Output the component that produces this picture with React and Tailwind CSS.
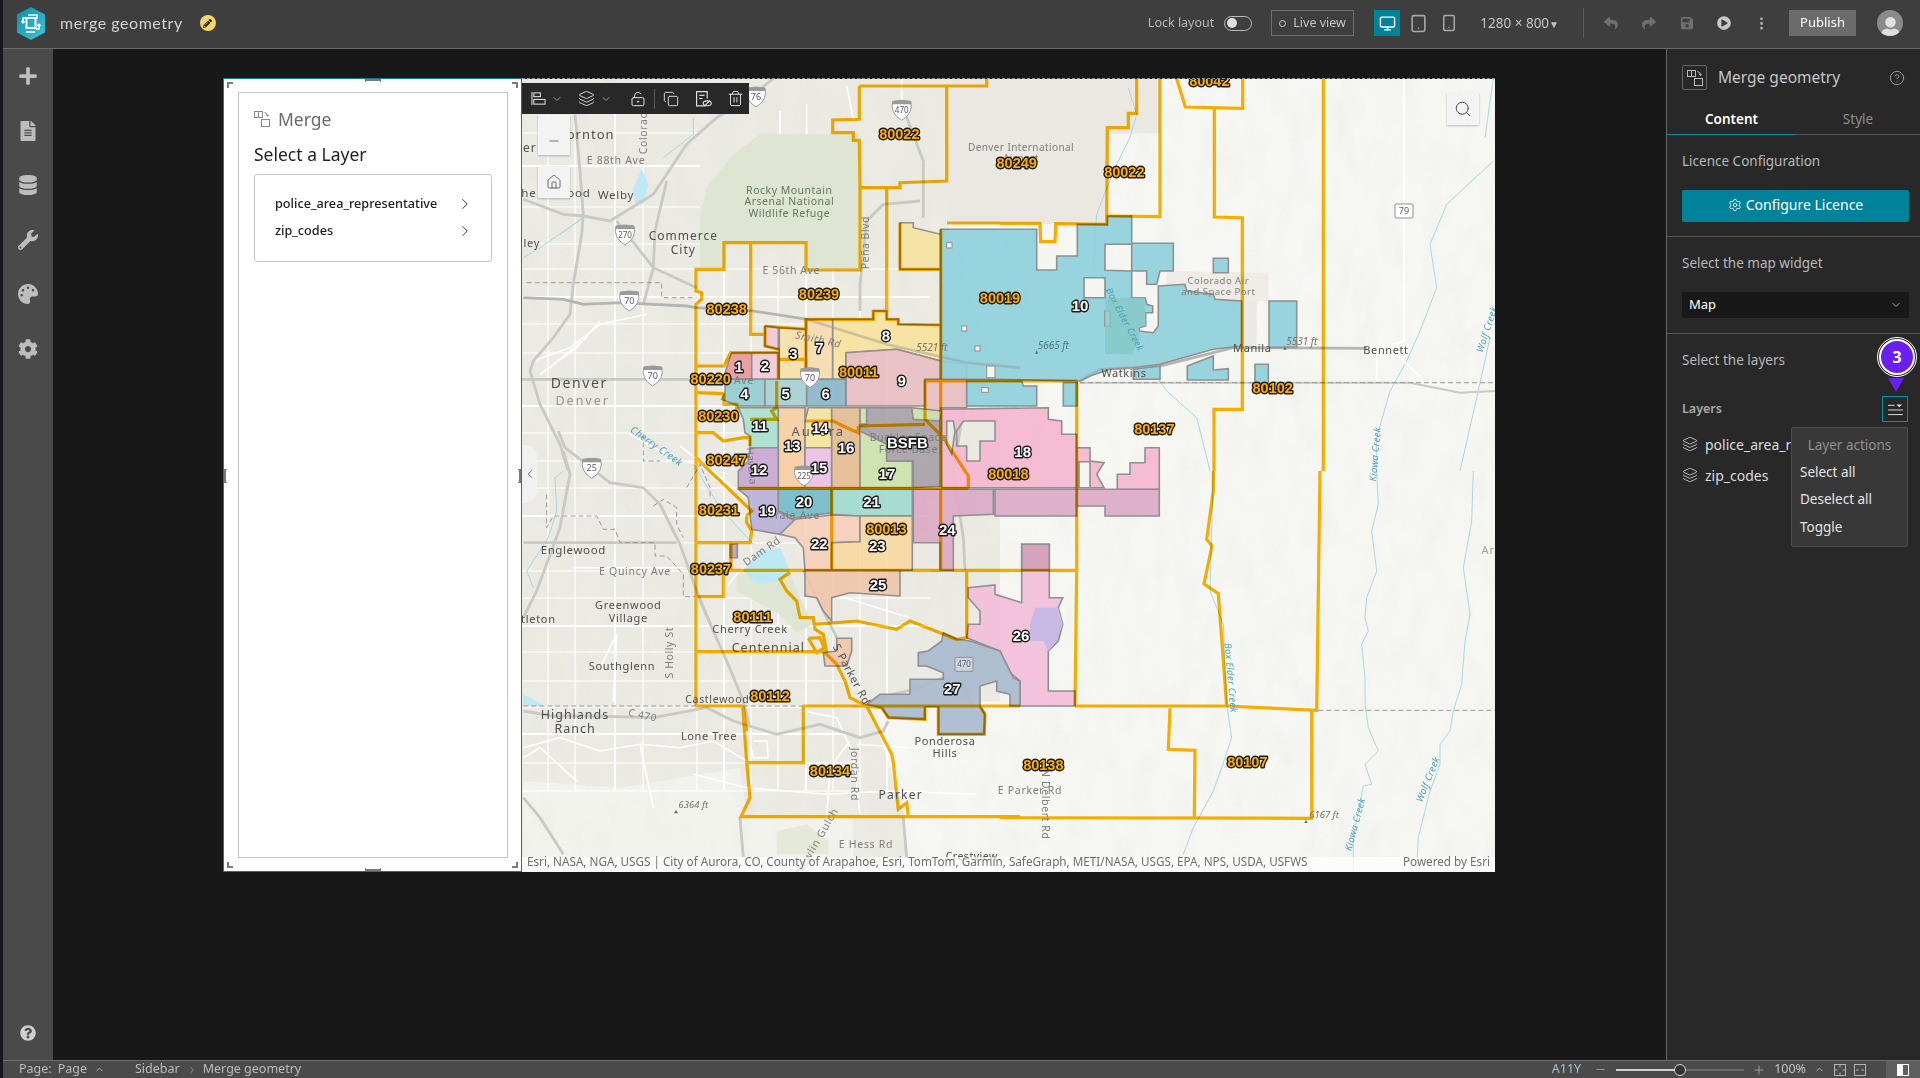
import React from "react";
import { FaPlus, FaFileAlt, FaDatabase, FaWrench, FaPalette, FaCog, FaQuestionCircle, FaReply, FaShare, FaSave, FaPlayCircle, FaUser, FaPencilAlt } from "react-icons/fa";
import { BsThreeDotsVertical } from "react-icons/bs";
import { Monitor, Tablet, Smartphone, Layers, ChevronRight, ChevronDown, ChevronLeft, ChevronUp, Settings, CircleHelp, Search, Home, Minus, Plus, LockKeyholeOpen, Copy, Trash2 } from "lucide-react";

const conv = (ox, oy) => (s) =>
  s.trim().split(/\s+/).map((p) => { const [x, y] = p.split(",").map(Number); return `${(ox + x / 3).toFixed(1)},${(oy + y / 3).toFixed(1)}`; }).join(" ");
const z4 = conv(520, 70), z5 = conv(680, 330), z8 = conv(520, 600), z9 = conv(1000, 70), z10 = conv(1000, 470), z11 = conv(520, 430);
const pathOf = (...rings) => rings.map((r) => "M" + r.split(" ").join("L") + "Z").join("");

const urban = "522,78 947,78 947,222 1000,380 1000,700 870,705 905,815 905,871 522,871";
const gridV = [548, 575, 615, 643, 697, 724, 751, 778, 806, 833, 860, 887];
const gridH = [132, 165, 206, 243, 268, 296, 323, 352, 378, 405, 432, 460, 487, 515, 542, 570, 597, 625, 651, 680, 706, 733, 762, 790];

const grayRoads = [
  z4("10,385 130,430 190,435 270,450 400,370 500,220 590,140 700,70 760,23"),
  z4("165,130 180,300 190,430 185,490 160,640 150,730 100,800 40,870 30,900 60,1000 120,1120 145,1200"),
  z4("10,680 130,685 190,700 300,695 500,705 528,710 700,720 860,745 1100,820 1340,875 1500,890"),
  z4("290,450 400,590 530,650"),
  z4("440,330 405,480 400,590 370,700"),
  z4("1020,720 1020,640 1040,450 1090,400 1200,390"),
  z4("1145,100 1210,270 1210,440"),
  z4("5,925 530,925 1000,925"),
  z11("115,0 135,50 200,100 270,155 370,170 420,220 480,340 530,480 580,600"),
  z11("130,60 150,130 120,290 50,480 10,560"),
  z11("10,335 150,335 470,335"),
  z8("540,0 620,180 670,300 690,380"),
  z8("10,330 100,345 220,345 400,350 560,320 640,360 770,400 900,370 1020,410 1090,390 1105,360"),
  z8("10,590 60,650 130,760"),
  z8("660,650 670,770"),
  z8("1150,650 1160,770"),
  z5("862,150 850,240 820,420 850,620 855,718"),
  z5("375,0 380,145 375,350 370,470"),
  z5("457,0 455,145"),
  z5("370,718 430,840 470,920"),
  z5("600,1100 700,1075 790,1040 850,1060 880,1130"),
  z9("240,930 300,895 480,885 700,830 1100,832"),
  z9("240,935 1230,935 1380,965 1485,960"),
];
const whiteRoads = [
  z4("40,870 150,830 240,760 380,730"), z4("60,910 170,830 240,750"), z4("100,880 200,800"),
  z8("10,440 120,410 240,450 360,430 480,440 580,420 680,480"), z8("170,540 60,440 10,470"), z8("680,560 920,580 1110,570 1370,580"),
  z8("240,200 290,100 280,300"), z8("850,330 950,350 1000,460 1020,640"), z8("700,420 740,420 745,470 700,470 690,430"), z8("1170,440 1010,430"),
  z8("360,430 400,620"), z8("920,650 930,500 990,420"), z8("520,520 680,560"),
  z11("330,10 460,80 530,100"), z11("690,390 640,440 620,470"), z11("160,410 490,410"),
  z5("0,345 200,500"), z5("460,790 690,860"), z9("1212,23 1212,810 1130,835 1130,930"), z9("1190,850 1290,945"), z9("810,832 1100,832"),
  z4("1145,23 1145,100"), z4("980,45 1000,145"), z4("780,190 780,120"), z4("860,190 860,100"),
];
const rivers = [
  z10("1130,0 1135,100 1115,180 1130,300 1100,380 1095,440 1105,480 1085,520 1095,620 1095,700 1105,770 1135,840 1095,880 1115,940 1090,945 1060,1100 1060,1200"),
  z10("1420,0 1415,150 1390,290 1410,430 1395,510 1385,640 1360,720 1350,780 1320,820 1320,880 1290,960 1255,1100 1250,1200"),
  z10("640,0 630,360 670,460 680,700 695,800 665,890 640,960 580,1070 550,1150"),
  z9("1480,270 1340,400 1290,520 1310,650 1260,780 1220,870 1170,960 1130,1100 1130,1200"),
  z9("1470,800 1430,980 1380,1200"),
  z9("385,50 410,130 390,200 340,300 290,430 280,580 330,650 390,800 500,960 590,1040 630,1200"),
  z9("1480,23 1455,200"),
  z4("120,490 190,440 60,530 10,560"), z4("340,1080 480,1180"), z4("520,140 520,190 430,260"),
  z11("130,120 105,140 110,240 85,320 20,420 40,470"), z11("520,100 600,230 700,340"),
];
const orange = [
  z4("1018,45 1018,145 938,147 938,185 1000,185 1000,208 1018,208 1020,350 1140,350 1140,335 1280,330 1280,45 1018,45"),
  z4("1280,45 1400,45 1400,23"), z4("1100,350 1100,720"),
  z4("528,885 528,700 545,685 545,665 528,660 528,595 612,595 612,515 858,515 858,597 1020,597 1020,350"),
  "696,365 696,705",
  z4("692,515 692,790 735,790"), z4("528,885 612,885 632,845 775,845"), z4("528,965 612,968"),
  z4("735,765 735,825 775,835 775,925"),
  z4("735,765 858,775 858,745 1060,745 1060,720 1100,720 1100,745 1135,745 1135,760 1262,762"),
  z4("778,865 858,865 858,925"), z4("858,745 858,925"), z4("1140,455 1140,595 1262,595"), z4("1262,475 1262,925"),
  z4("770,930 770,1010 755,1020 770,1045 690,1045"),
  z4("612,968 612,1000 650,1000 650,1045"),
  z11("528,5 580,5 610,30 670,20 690,20 690,45"),
  z11("528,80 695,240 680,255 680,275 695,300 690,335 528,335"), z11("633,335 633,415"), z11("610,415 610,497 528,497"),
  z5("140,718 1190,718"), z5("175,472 865,472"),
  z5("865,472 865,435 790,320 735,265 735,150 1190,150"), z5("535,285 735,280"), z5("535,285 535,305 500,290 460,270 375,270"),
  z5("455,475 455,718"), z5("782,150 782,718"),
  z5("330,725 300,745 320,780 350,810 360,860 400,860 405,895 430,910 440,965"),
  z5("405,880 530,870 650,895 690,870 780,905 830,925 860,920 860,718"),
  z5("385,922 420,920 432,950 410,965 385,922"),
  z5("45,962 435,962"), z5("190,1127 200,1200"),
  z8("850,315 850,485 680,485"), z8("668,315 680,485 690,590 663,647 1500,647"),
  z8("525,315 668,315"), z8("850,315 1500,315"),
  z8("1040,315 1115,460 1120,485 1135,625 1160,605 1165,645"), z8("915,155 950,190 975,240 990,290 1040,315"),
  z5("1190,150 1190,718 1185,1125"),
  z10("225,705 680,705 950,718 960,0"),
  z10("640,0 640,60 620,205 636,225 612,338 655,368 680,705"),
  z10("510,712 505,835 585,838 583,1042"), z10("935,718 935,1042 0,1040"),
  z9("0,457 120,457 122,512 165,512 167,458 320,460 322,170 385,170 385,127 410,127 410,23"),
  "947,222 1000,222",
  z9("322,435 480,437 480,23"), z9("530,23 556,108 728,112 728,23"),
  z9("643,112 643,438 727,440 727,1015 642,1015 642,1200"), z9("970,23 970,1200"),
  z5("775,1127 775,1210 913,1210 915,1150 900,1125"),
  z5("560,1125 605,1130 625,1160 735,1165 735,1127"),
];

const polys = [
  [z4("1140,455 1180,455 1180,470 1262,490 1262,595 1140,595"), "#f6e2a0"],
  [z5("135,125 155,65 215,65 215,145 135,145"), "#e8989a"],
  [z5("215,65 295,65 295,145 215,145"), "#f4c9da"],
  [z4("735,765 775,770 775,835 735,825"), "#f2c8d8"],
  [z4("778,770 858,775 858,925 778,925"), "#f8e0a8"],
  [z4("858,745 938,745 938,925 858,925"), "#f8dcb0"],
  [z4("938,745 1060,745 1060,720 1100,720 1100,745 1135,745 1135,760 1262,762 1262,870 1130,835 978,845 978,925 938,925"), "#f8e29c"],
  [z4("978,845 1130,835 1262,870 1340,880 1340,925 1215,925 1215,1005 978,1005"), "#e9bec2"],
  [z4("1215,925 1340,925 1340,1010 1262,1010 1262,1045 1215,1045"), "#e9bec2"],
  [z5("135,145 255,145 255,225 175,225 125,205 135,185"), "#93ccd0"],
  [z5("255,145 380,145 380,225 255,225"), "#a6d0d4"],
  [z5("380,145 497,145 497,225 380,225"), "#88b6ca"],
  [z5("175,230 295,230 295,350 210,350 210,315 195,305 190,265"), "#a7e2cf"],
  [z5("295,230 375,230 375,470 295,470"), "#f8cfa2"],
  [z5("385,230 455,230 455,350 375,350 375,270"), "#f6e49c"],
  [z5("375,350 455,350 455,470 375,470"), "#ecc0e8"],
  [z5("455,230 540,230 540,470 455,470"), "#e3bc90"],
  [z5("540,280 620,340 620,390 697,390 697,470 540,470"), "#cbe2a8"],
  [z5("540,230 560,230 560,280 540,280"), "#cbe2a8"],
  [z5("560,230 695,230 700,265 780,270 785,465 700,470 700,390 620,390 620,340 540,300 540,280 560,280"), "#a8a0a8"],
  [z5("695,230 785,240 780,270 700,265"), "#cbe2a8"],
  [z5("210,350 295,350 295,470 175,470 175,420 205,390"), "#c9a6d2"],
  [z5("175,475 295,475 295,540 345,570 300,610 215,595 205,500"), "#b9b0d8"],
  [z5("295,475 455,475 455,545 345,560 295,540"), "#72bacb"],
  [z5("455,475 697,475 697,555 540,555 455,550"), "#a0dcce"],
  [z5("345,565 455,552 540,555 540,632 455,635 455,718 375,718 370,650 345,620 300,610"), "#f5cfb9"],
  [z5("540,555 697,555 697,718 455,718 455,635 540,632"), "#f7d9a2"],
  [z5("375,718 660,718 660,795 510,785 455,800 455,870 430,840 410,800 375,795"), "#efc5aa"],
  [z5("470,922 515,922 515,960 500,1005 435,1005 430,965 470,960"), "#efc5aa"],
  [z5("150,640 172,640 172,680 150,680"), "#b9a0c8"],
  [z5("700,475 1190,475 1190,555 945,555 945,475 940,475 940,550 820,555 820,718 780,718 780,635 700,635"), "#dca8c4"],
  [z5("1190,475 1438,475 1438,555 1275,555 1275,525 1190,525"), "#dca8c4"],
  [z5("865,770 945,762 945,790 1025,815 1025,640 1108,640 1108,800 1148,800 1135,830 1148,880 1135,930 1105,960 1105,1080 1185,1080 1185,1125 1020,1125 1020,1050 985,1020 960,960 860,920 865,880 900,880 900,840 865,800"), "#f3bed9"],
  [z5("1025,640 1108,640 1108,718 1025,718"), "#cfa0b8"],
  [z5("790,905 830,925 870,930 960,960 1000,1040 1020,1050 1020,1125 990,1125 990,1090 950,1080 950,1050 900,1065 900,1125 915,1150 913,1210 775,1210 775,1127 735,1127 735,1165 625,1160 605,1130 560,1120 600,1090 690,1090 690,1045 790,1045 790,1025 740,1005 715,1005 715,965 745,960 785,930"), "#a9b9cd"],
];
const holed = [
  [pathOf(z5("785,235 1105,230 1105,265 1145,270 1145,310 1190,310 1190,470 785,470"), z5("850,270 945,270 945,330 900,330 900,390 860,390 860,345 830,345 830,300"), z5("800,270 820,270 825,300 815,370 800,340")), "#f5b6d1"],
  [pathOf(z5("1190,350 1230,350 1230,390 1272,395 1250,430 1272,470 1190,470"), z5("1197,392 1230,392 1230,470 1197,470")), "#f5b6d1"],
  [pathOf(z5("1312,430 1350,430 1350,395 1395,395 1395,350 1438,350 1438,475 1312,475")), "#f5b6d1"],
  [pathOf(
    z9("-178,475 110,475 110,597 170,597 170,555 232,555 232,460 322,460 322,435 395,435 395,517 520,517 520,600 480,600 470,640 440,640 440,600 395,600 395,680 435,680 440,700 458,705 458,725 437,725 437,765 418,770 418,780 460,785 475,765 475,645 555,640 560,660 640,670 645,685 725,690 725,825 640,835 480,880 400,890 330,895 270,915 240,930 0,925 -178,925"),
    z9("315,520 395,520 395,600 315,598"), z9("252,620 315,620 315,680 252,680"), z9("315,720 330,720 330,765 315,765")
  ), "#8fd0dc"],
  [pathOf(z9("-100,930 65,930 70,945 110,945 110,1005 -100,1005")), "#8fd0dc"],
  [pathOf(z9("190,935 232,935 232,1005 190,1005")), "#8fd0dc"],
  [pathOf(z9("562,885 640,855 640,897 685,893 685,927 562,927")), "#8fd0dc"],
  [pathOf(z9("400,895 480,885 480,925 400,925")), "#8fd0dc"],
  [pathOf(z9("640,562 685,562 685,605 640,605")), "#8fd0dc"],
  [pathOf(z9("807,690 890,690 890,828 807,830")), "#8fd0dc"],
  [pathOf(z9("765,880 805,880 805,935 765,935")), "#8fd0dc"],
];

const zips = [
  [z4, 1138, 190, "80022"], [z4, 897, 670, "80239"], [z4, 620, 715, "80238"], [z4, 572, 925, "80220"], [z4, 1016, 903, "80011"], [z4, 595, 1035, "80230"], [z4, 620, 1168, "80247"], [z4, 1440, 682, "80019"],
  [z9, 50, 277, "80249"], [z9, 373, 303, "80022"], [z9, 628, 30, "80042"], [z9, 818, 952, "80102"], [z9, 463, 1073, "80137"],
  [z5, 985, 428, "80018"], [z5, 619, 595, "80013"], [z5, 117, 538, "80231"], [z5, 93, 713, "80237"], [z5, 218, 858, "80111"], [z5, 270, 1095, "80112"],
  [z8, 930, 510, "80134"], [z10, 130, 881, "80138"], [z10, 742, 872, "80107"],
];
const nums = [
  [z5, 177, 107, "1"], [z5, 255, 105, "2"], [z5, 340, 68, "3"], [z5, 418, 50, "7"], [z5, 618, 15, "8"], [z5, 665, 148, "9"], [z5, 193, 187, "4"], [z5, 317, 187, "5"], [z5, 437, 187, "6"],
  [z5, 240, 283, "11"], [z5, 420, 290, "14"], [z5, 337, 345, "13"], [z5, 498, 350, "16"], [z5, 682, 335, "BSFB"], [z5, 417, 410, "15"], [z5, 621, 427, "17"], [z5, 237, 415, "12"], [z5, 1028, 363, "18"],
  [z5, 372, 513, "20"], [z5, 575, 513, "21"], [z5, 262, 540, "19"], [z5, 418, 637, "22"], [z5, 592, 645, "23"], [z5, 802, 597, "24"], [z5, 594, 760, "25"], [z5, 1023, 913, "26"], [z5, 817, 1072, "27"], [z9, 240, 703, "10"],
];
const DK = "#4f4f4f", MD = "#7d7d7d", BL = "#4f9fbd", GR = "#5d7a55", BR = "#7b7460";
const places = [
  [z4, 212, 190, "ornton", 13, DK, 0, 0, 1], [z4, 0, 230, "ter", 12, DK, 0, 0, 1, "end", 50],
  [z4, 0, 365, "She", 11.5, DK, 0, 0, 0.9, "end", 50], [z4, 177, 365, "ood", 11.5, DK, 0, 0, 0.9], [z4, 288, 269, "E 88th Ave", 10.5, MD, 0, 0, 0.7], [z4, 371, 175, "Colorado", 10.5, MD, -90, 0, 0.6],
  [z4, 288, 372, "Welby", 11.5, DK, 0, 0, 0.7], [z4, 490, 495, "Commerce", 12, DK, 0, 0, 1], [z4, 490, 535, "City", 12, DK, 0, 0, 1], [z4, 0, 515, "ley", 11, DK, 0, 0, 0.7, "end", 60],
  [z4, 178, 935, "Denver", 14, DK, 0, 0, 1.6], [z4, 188, 987, "Denver", 12.5, "#9a958c", 0, 0, 2],
  [z4, 808, 358, "Rocky Mountain", 10.5, GR, 0, 0, 0.5], [z4, 808, 392, "Arsenal National", 10.5, GR, 0, 0, 0.5], [z4, 808, 426, "Wildlife Refuge", 10.5, GR, 0, 0, 0.5],
  [z4, 1037, 515, "Peña Blvd", 10.5, MD, -90, 0, 0.5], [z4, 814, 597, "E 56th Ave", 10.5, MD, 0, 0, 0.6], [z4, 895, 805, "Smith Rd", 10.5, MD, 12, 1, 0.6], [z4, 1235, 830, "5521 ft", 10, BR, 0, 1, 0],
  [z4, 672, 927, "Ave", 10.5, MD, 0, 0, 0.7], [z4, 895, 1080, "Aurora", 13, "#5a5a5a", 0, 0, 2], [z4, 1165, 1098, "Buckley Space", 10.5, MD, 0, 0, 0.6], [z4, 1165, 1135, "Force Base", 10.5, MD, 0, 0, 0.6],
  [z4, 410, 1125, "Cherry Creek", 10, BL, 35, 1, 0.4],
  [z9, 63, 230, "Denver International", 10, MD, 0, 0, 0.4], [z9, 63, 263, "Airport", 10, MD, 0, 0, 0.4],
  [z9, 655, 630, "Colorado Air", 9.5, MD, 0, 0, 0.5], [z9, 655, 662, "and Space Port", 9.5, MD, 0, 0, 0.5], [z9, 375, 745, "Box Elder Creek", 9.5, BL, 62, 1, 0.3],
  [z9, 160, 822, "5665 ft", 10, "#4f7b78", 0, 1, 0], [z9, 905, 810, "5531 ft", 10, BR, 0, 1, 0], [z9, 372, 907, "Watkins", 11, DK, 0, 0, 0.6], [z9, 757, 832, "Manila", 11, DK, 0, 0, 0.6], [z9, 1158, 837, "Bennett", 11, DK, 0, 0, 0.6],
  [z9, 1460, 775, "Wolf Creek", 9.5, BL, -72, 1, 0.3], [z9, 1125, 1150, "Kiowa Creek", 9.5, BL, -85, 1, 0.3],
  [z5, 350, 553, "Yale Ave", 10.5, MD, 0, 0, 0.8], [z5, 245, 660, "Dam Rd", 10.5, MD, -35, 0, 0.6], [z5, 210, 895, "Cherry Creek", 11, DK, 0, 0, 0.7], [z5, 265, 950, "Centennial", 12.5, DK, 0, 0, 1], [z5, 112, 1105, "Castlewood", 10.5, DK, 0, 0, 0.7], [z5, 515, 1030, "S Parker Rd", 11, DK, 62, 0, 0.7],
  [z5, 215, 405, "Havana", 10, MD, 85, 0, 0.3],
  [z11, 160, 358, "Englewood", 11.5, DK, 0, 0, 0.6], [z11, 345, 420, "E Quincy Ave", 10.5, MD, 0, 0, 0.7], [z11, 325, 523, "Greenwood", 11, DK, 0, 0, 0.7], [z11, 325, 560, "Village", 11, DK, 0, 0, 0.7], [z11, 0, 565, "ttleton", 11, DK, 0, 0, 0.7, "end", 107],
  [z8, 306, 194, "Southglenn", 11, DK, 0, 0, 0.7], [z8, 447, 155, "S Holly St", 10.5, MD, -90, 0, 0.6], [z8, 165, 339, "Highlands", 12.5, DK, 0, 0, 1], [z8, 165, 381, "Ranch", 12.5, DK, 0, 0, 1], [z8, 368, 342, "C 470", 10, MD, 12, 0, 0.6],
  [z8, 567, 405, "Lone Tree", 11, DK, 0, 0, 0.6], [z8, 1275, 420, "Ponderosa", 11, DK, 0, 0, 0.6], [z8, 1275, 455, "Hills", 11, DK, 0, 0, 0.6], [z8, 1003, 520, "Jordan Rd", 10.5, MD, 90, 0, 0.6], [z8, 1142, 582, "Parker", 12, DK, 0, 0, 1.2],
  [z8, 1530, 568, "E Parker Rd", 10.5, MD, 0, 0, 0.7], [z10, 138, 1000, "N Delbert Rd", 10.5, MD, 90, 0, 0.6], [z8, 1038, 730, "E Hess Rd", 10.5, MD, 0, 0, 0.7], [z8, 1355, 765, "Crestview", 10.5, DK, 0, 0, 0.5],
  [z8, 520, 612, "6364 ft", 9.5, BR, 0, 1, 0], [z8, 890, 720, "Newlin Gulch", 10.5, MD, -60, 0, 0.8], [z10, 972, 1030, "6167 ft", 9.5, BR, 0, 1, 0], [z10, 693, 620, "Box Elder Creek", 9.5, BL, 85, 1, 0.3], [z10, 1065, 1060, "Kiowa Creek", 9.5, BL, -75, 1, 0.3], [z10, 1283, 925, "Wolf Creek", 9.5, BL, -68, 1, 0.3], [z10, 1465, 237, "Ar", 11, "#a39e90", 0, 0, 1],
];
const shields = [
  [z4, 328, 690, "70", 1], [z4, 398, 915, "70", 1], [z4, 870, 920, "70", 1], [z4, 315, 492, "270", 1], [z4, 708, 78, "76", 1], [z4, 1145, 118, "470", 1], [z11, 215, 112, "25", 1], [z5, 372, 435, "225", 1], [z5, 852, 1000, "470", 0], [z9, 1212, 420, "79", 0],
];
const at = (fn, x, y) => fn(`${x},${y}`).split(",").map(Number);

function Shield({ pos, label, inter }) {
  const [x, y] = pos;
  return (
    <g transform={`translate(${x} ${y})`}>
      {inter ? (
        <path d="M-9,-9 Q0,-11 9,-9 Q12,3 0,10 Q-12,3 -9,-9Z" fill="#fbfbfb" stroke="#9a9a9a" strokeWidth="1" />
      ) : (
        <rect x="-9" y="-7" width="18" height="14" fill="#fff" fillOpacity={label === "470" ? 0.35 : 1} stroke="#8f8f8f" strokeWidth="1" rx="1" />
      )}
      {inter ? <path d="M-9,-9 Q0,-11 9,-9 L9.7,-6 L-9.7,-6Z" fill="#9a9a9a" /> : null}
      <text y="3" textAnchor="middle" fontSize={label.length > 2 ? 8 : 9} fill="#5f5f5f">{label}</text>
    </g>
  );
}

function MapArt() {
  return (
    <svg viewBox="522 78 973 793" className="block w-full h-full font-['Noto_Sans',sans-serif]">
      <defs>
        <filter id="hills" x="0" y="0" width="100%" height="100%">
          <feTurbulence type="fractalNoise" baseFrequency="0.045 0.022" numOctaves="4" seed="5" />
          <feColorMatrix values="0 0 0 0 0.6  0 0 0 0 0.6  0 0 0 0 0.56  0.6 0.6 0 0 -0.52" />
        </filter>
      </defs>
      <rect x="522" y="78" width="973" height="793" fill="#f6f6f2" />
      <polygon points={urban} fill="#ebeae3" />
      <polygon points={z8("10,540 300,560 660,500 680,650 1000,650 1000,780 10,780")} fill="#f3f3ee" />
      <rect x="522" y="78" width="973" height="793" filter="url(#hills)" opacity="0.22" />
      <polygon points="947,78 1160,78 1160,132 1110,133 1107,223 947,223" fill="#ebe8e2" />
      <polygon points={z9("500,600 805,605 805,690 725,690 645,685 500,680")} fill="#efece7" />
      <polygon points={z9("725,690 770,690 770,830 725,825")} fill="#ebe9e3" />
      {gridV.map((x, i) => <line key={x} x1={x} y1={i > 3 ? 270 : 100} x2={x} y2="790" stroke="#fff" strokeWidth={i % 3 === 2 ? 1.8 : 1.2} />)}
      {gridH.map((y, i) => <line key={y} x1="522" y1={y} x2={y < 260 ? 700 : y > 640 ? 850 : 930} y2={y} stroke="#fff" strokeWidth={i % 4 === 1 ? 1.8 : 1.2} />)}
      <polygon points={z4("540,440 560,350 640,250 720,190 1015,190 1015,595 860,595 860,515 612,515 612,590 540,590")} fill="#dfe5d3" />
      <polygon points={z5("170,730 330,730 360,800 400,880 350,905 300,850 170,780")} fill="#dfe5d3" />
      <polygon points={z8("770,690 860,670 925,720 925,760 770,760")} fill="#e4e9d8" />
      <polygon points={z5("190,720 240,660 300,650 330,720 300,750 230,760")} fill="#bfe8f7" />
      <polygon points={z4("340,350 365,295 385,340 370,400 345,395")} fill="#bfe8f7" />
      <polygon points={z8("10,280 75,315 10,315")} fill="#bfe8f7" />
      {rivers.map((r, i) => <polyline key={i} points={r} fill="none" stroke="#a9d8e2" strokeWidth="1" />)}
      {whiteRoads.map((r, i) => <polyline key={i} points={r} fill="none" stroke="#fff" strokeWidth="1.6" />)}
      {grayRoads.map((r, i) => <polyline key={i} points={r} fill="none" stroke="#c9c9c5" strokeWidth={i > 21 ? 2 : 2.8} />)}
      {[z4("20,635 425,635 425,680 530,680"), z8("10,315 525,315"), z8("668,315 850,315"), z10("955,718 1485,718"), z9("240,935 1485,935"),
        z11("80,190 80,290 100,255 230,255 250,295 285,295 300,335 405,335 405,375 440,375 490,430 490,497 525,497"), z11("400,225 430,205 470,230 470,280 490,320"), z4("370,1090 370,1170 420,1170"), z11("500,170 540,100 570,170 570,200")
      ].map((r, i) => <polyline key={i} points={r} fill="none" stroke="#9a9a96" strokeWidth="1" strokeDasharray="5 3" />)}
      {polys.map(([p, c], i) => <polygon key={i} points={p} fill={c} fillOpacity="0.9" stroke="#8f8f8f" strokeWidth="1.6" />)}
      {holed.map(([d, c], i) => <path key={i} d={d} fill={c} fillRule="evenodd" fillOpacity="0.92" stroke="#8f8f8f" strokeWidth="1.6" />)}
      <polygon points={z5("1065,830 1135,830 1148,880 1130,930 1105,960 1090,930 1050,930 1050,880")} fill="#c6b9e2" />
      <polygon points={z9("315,680 435,680 437,765 418,770 418,810 395,850 315,850")} fill="#86c8c4" fillOpacity="0.8" />
      {[["1280,515", 16, 16], ["1325,765", 15, 15], ["1365,825", 15, 15], ["1400,885", 25, 35], ["1385,950", 20, 14]].map(([o, w, h], i) => {
        const [x, y] = o.split(",").map(Number);
        return <rect key={i} x={520 + x / 3} y={70 + y / 3} width={w / 3} height={h / 3} fill="#f4f4f0" stroke="#8f8f8f" strokeWidth="1" />;
      })}
      {grayRoads.slice(2, 3).concat(grayRoads.slice(21, 22)).map((r, i) => <polyline key={i} points={r} fill="none" stroke="#9b9b9b" strokeOpacity="0.45" strokeWidth="2.5" />)}
      <g className="mix-blend-multiply">
        {orange.map((r, i) => <polyline key={i} points={r} fill="none" stroke="#ffb400" strokeWidth="3.2" strokeLinejoin="miter" />)}
      </g>
      {shields.map(([fn, x, y, t, inter], i) => <Shield key={i} pos={at(fn, x, y)} label={t} inter={inter} />)}
      {places.map(([fn, x, y, t, size, c, rot, it, ls, anchor, ex], i) => {
        const [px, py] = anchor === "end" ? at(fn, ex, y) : at(fn, x, y);
        return (
          <text key={i} x={px} y={py + size * 0.36} fontSize={size} fill={c} textAnchor={anchor || "middle"} letterSpacing={ls} fontStyle={it ? "italic" : "normal"} transform={rot ? `rotate(${rot} ${px} ${py})` : undefined}>{t}</text>
        );
      })}
      <polygon points={z8("462,637 474,637 468,627")} fill="#6b6555" />
      <polygon points={z9("850,836 860,836 855,827")} fill="#6b6555" />
      <polygon points={z9("105,848 115,848 110,838")} fill="#4f7b78" />
      <polygon points={z10("913,1056 923,1056 918,1047")} fill="#6b6555" />
      <g className="font-['Liberation_Sans',sans-serif] font-bold" strokeLinejoin="round">
        {zips.map(([fn, x, y, t], i) => {
          const [px, py] = at(fn, x, y);
          return <text key={i} x={px} y={py + 5} fontSize="14.5" textAnchor="middle" fill="#ffae00" stroke="#1a1a1a" strokeWidth="2.8" className="[paint-order:stroke]">{t}</text>;
        })}
        {nums.map(([fn, x, y, t], i) => {
          const [px, py] = at(fn, x, y);
          return <text key={i} x={px} y={py + 5.3} fontSize="15" textAnchor="middle" fill="#fff" stroke="#1a1a1a" strokeWidth="2.8" className="[paint-order:stroke]">{t}</text>;
        })}
      </g>
    </svg>
  );
}

function Logo() {
  return (
    <svg viewBox="0 0 28 33" className="w-[28px] h-[33px]">
      <defs>
        <linearGradient id="lg" x1="0" y1="0" x2="1" y2="1"><stop offset="0" stopColor="#0b8fa8" /><stop offset="1" stopColor="#3fc6da" /></linearGradient>
      </defs>
      <polygon points="14,0 28,7.5 28,25.5 14,33 0,25.5 0,7.5" fill="url(#lg)" />
      <rect x="9.5" y="11" width="9" height="10" fill="none" stroke="#fff" strokeWidth="2" />
      <path d="M6,16 V11 H9 M6,16 L4.5,14 M6,16 L7.5,14 M22,17 V22 H19 M22,17 L20.5,19 M22,17 L23.5,19 M11,8 H20 V12 M9,25 H18" fill="none" stroke="#fff" strokeWidth="1.6" />
    </svg>
  );
}

function MergeIcon({ className, color = "#8a8a8a" }) {
  return (
    <svg viewBox="0 0 16 16" className={className} fill="none" stroke={color} strokeWidth="1">
      <rect x="0.5" y="0.5" width="8" height="6" />
      <line x1="4.5" y1="0.5" x2="4.5" y2="6.5" />
      <rect x="7.5" y="8.5" width="8" height="7" />
      <path d="M10.5,1.5 Q13.5,2 13.5,5 M12.3,4 L13.5,5.5 L14.7,4" />
    </svg>
  );
}

function AlignIcon() {
  return (
    <svg viewBox="0 0 16 16" className="w-[15px] h-[15px]" fill="none" stroke="#e0e0e0" strokeWidth="1.1">
      <line x1="1" y1="1" x2="1" y2="15" /><rect x="3" y="2" width="7" height="4" /><rect x="3" y="9" width="12" height="5" />
    </svg>
  );
}
function NoteIcon() {
  return (
    <svg viewBox="0 0 16 16" className="w-[17px] h-[17px]" fill="none" stroke="#e0e0e0" strokeWidth="1.1">
      <path d="M10,15 H1.5 V1.5 H11.5 V8" /><line x1="4" y1="5" x2="9" y2="5" /><line x1="4" y1="8" x2="7" y2="8" /><ellipse cx="11.5" cy="12.5" rx="3.8" ry="2.3" /><line x1="9" y1="15" x2="14" y2="10" />
    </svg>
  );
}
function LayerActionsIcon() {
  return (
    <svg viewBox="0 0 16 14" className="w-[15px] h-[13px]" fill="#e6e6e6">
      <rect x="0" y="2" width="7" height="1" /><polygon points="9,1.5 15,1.5 12,4.5" /><rect x="0" y="7" width="16" height="1" /><rect x="0" y="12" width="16" height="1" />
    </svg>
  );
}
function FitIcon({ inward }) {
  return (
    <svg viewBox="0 0 12 12" className="w-[12px] h-[12px]" fill="none" stroke="#bdbdbd" strokeWidth="0.9">
      <rect x="0.5" y="0.5" width="11" height="11" />
      {inward ? <path d="M2,6 H4.5 M10,6 H7.5" /> : <path d="M6,0.5 V3.5 M6,8.5 V11.5 M0.5,6 H3.5 M8.5,6 H11.5" />}
    </svg>
  );
}

function Corner({ className }) {
  return <span className={`absolute w-[6px] h-[6px] border-[#7a7a7a] ${className}`} />;
}

function TopBar() {
  return (
    <header className="h-[49px] shrink-0 pb-[2px] flex items-center bg-[#3e3e3e] border-b border-[#6a6a6a] text-[#c4c4c4]">
      <div className="ml-[14px] flex items-center"><Logo /></div>
      <span className="ml-[15px] text-[16px] text-[#d2d2d2] font-['Lato',sans-serif] tracking-[0.55px]">merge geometry</span>
      <span className="ml-[17px] w-[16px] h-[16px] rounded-full bg-[#f8d568] flex items-center justify-center"><FaPencilAlt className="w-[9px] h-[9px] text-[#222]" /></span>
      <div className="ml-auto flex items-center">
        <span className="text-[12.5px] text-[#b8b8b8]">Lock layout</span>
        <span className="ml-[10px] w-[28px] h-[15px] rounded-full border border-[#bdbdbd] flex items-center px-[2px]"><span className="w-[10px] h-[10px] rounded-full bg-[#e0e0e0]" /></span>
        <div className="ml-[19px] w-[83px] h-[26px] border border-[#6f6f6f] flex items-center pl-[7px] gap-[7px] text-[12.5px] text-[#c4c4c4]">
          <span className="w-[7px] h-[7px] rounded-full border border-[#cfcfcf]" />Live view
        </div>
        <span className="ml-[20px] w-[26px] h-[26px] bg-[#00829b] flex items-center justify-center"><Monitor className="w-[17px] h-[17px] text-white" /></span>
        <Tablet className="ml-[9px] w-[19px] h-[19px] text-[#a8a8a8]" />
        <Smartphone className="ml-[12px] w-[18px] h-[18px] text-[#a8a8a8]" />
        <span className="ml-[22px] text-[13.5px] text-[#c4c4c4] whitespace-nowrap">1280 × 800<span className="text-[10px]">▼</span></span>
        <span className="ml-[24px] w-px h-[30px] bg-[#5c5c5c]" />
        <FaReply className="ml-[20px] w-[14px] h-[14px] text-[#6f6f6f]" />
        <FaShare className="ml-[24px] w-[14px] h-[14px] text-[#6f6f6f]" />
        <FaSave className="ml-[24px] w-[14px] h-[14px] text-[#6f6f6f]" />
        <FaPlayCircle className="ml-[23px] w-[14px] h-[14px] text-[#c8c8c8]" />
        <BsThreeDotsVertical className="ml-[23px] w-[15px] h-[15px] text-[#b0b0b0]" />
        <span className="ml-[20px] w-[67px] h-[26px] bg-[#6b6b6b] flex items-center justify-center text-[13px] text-white">Publish</span>
        <span className="ml-[21px] mr-[17px] w-[26px] h-[26px] rounded-full bg-[#8a8a8a] overflow-hidden flex items-end justify-center"><FaUser className="w-[21px] h-[21px] text-[#e0e0e0] -mb-[2px]" /></span>
      </div>
    </header>
  );
}

function LeftBar() {
  const icons = [FaPlus, FaFileAlt, FaDatabase, FaWrench, FaPalette, FaCog];
  return (
    <aside className="w-[50px] shrink-0 bg-[#4a4a4a] flex flex-col items-center pt-[17px] pb-[19px] text-[#bdbdbd]">
      <div className="flex flex-col items-center gap-[34.5px]">
        {icons.map((I, i) => <I key={i} className="w-[20px] h-[20px]" />)}
      </div>
      <FaQuestionCircle className="mt-auto w-[16px] h-[16px] text-[#cfcfcf]" />
    </aside>
  );
}

function WidgetPanel() {
  const rows = ["police_area_representative", "zip_codes"];
  return (
    <div className="relative w-[299px] shrink-0 bg-white border border-[#0a7f93] pl-[14px] pr-[13px] py-[13px]">
      <Corner className="left-[3px] top-[3px] border-l-2 border-t-2" />
      <Corner className="right-[3px] top-[3px] border-r-2 border-t-2" />
      <Corner className="left-[3px] bottom-[3px] border-l-2 border-b-2" />
      <Corner className="right-[3px] bottom-[3px] border-r-2 border-b-2" />
      <span className="absolute left-[141px] top-0 w-[16px] h-[3px] border-t-2 border-x border-[#7a7a7a]" />
      <span className="absolute left-[141px] bottom-0 w-[16px] h-[3px] border-b-2 border-x border-[#7a7a7a]" />
      <span className="absolute left-0 top-[390px] w-[3px] h-[14px] border-l-2 border-y border-[#7a7a7a]" />
      <span className="absolute right-0 top-[390px] w-[3px] h-[14px] border-r-2 border-y border-[#7a7a7a]" />
      <div className="h-full border border-[#c6c6c6] px-[15px] pt-[14px] font-['Noto_Sans',sans-serif]">
        <div className="flex items-center gap-[8px] h-[24px]">
          <MergeIcon className="w-[16px] h-[16px]" />
          <span className="text-[17.5px] text-[#6b6b6b]">Merge</span>
        </div>
        <div className="mt-[11px] text-[17.5px] leading-[24px] text-[#1f1f1f]">Select a Layer</div>
        <div className="mt-[8px] h-[88px] border border-[#c6c6c6] rounded-[3px] pl-[20px] pr-[17px] pt-[17px]">
          {rows.map((r, i) => (
            <div key={r} className={`flex items-center justify-between h-[24px] ${i ? "mt-[3px]" : ""}`}>
              <span className="text-[12.7px] text-[#1c1c1c] font-medium">{r}</span>
              <ChevronRight className="w-[18px] h-[18px] text-[#333]" strokeWidth={1.3} />
            </div>
          ))}
        </div>
      </div>
    </div>
  );
}

function MapBox() {
  const btn = "absolute bg-[#f3f3f3] shadow-[0_1px_2px_rgba(0,0,0,0.25)] flex items-center justify-center text-[#3a3a3a]";
  return (
    <div className="relative flex-1 overflow-hidden border-t border-dashed border-[#8f8f8f]">
      <MapArt />
      <div className="absolute left-0 top-[4px] w-[227px] h-[31px] bg-[#282828] flex items-center text-[#e0e0e0]">
        <span className="ml-[9px]"><AlignIcon /></span>
        <ChevronDown className="ml-[5px] w-[12px] h-[12px] text-[#9a9a9a]" />
        <Layers className="ml-[15px] w-[17px] h-[17px]" strokeWidth={1.3} />
        <ChevronDown className="ml-[5px] w-[12px] h-[12px] text-[#9a9a9a]" />
        <LockKeyholeOpen className="ml-[18px] w-[16px] h-[16px]" strokeWidth={1.5} />
        <span className="ml-[8px] w-px h-[20px] bg-[#5a5a5a]" />
        <Copy className="ml-[8px] w-[16px] h-[16px]" strokeWidth={1.4} />
        <span className="ml-[16px]"><NoteIcon /></span>
        <Trash2 className="ml-[15px] w-[17px] h-[17px]" strokeWidth={1.4} />
      </div>
      <div className={`${btn} left-[16px] top-[36px] w-[32px] h-[40px]`}><Minus className="w-[14px] h-[14px] mt-[12px]" strokeWidth={1.2} /></div>
      <div className={`${btn} left-[16px] top-[87px] w-[32px] h-[32px]`}><Home className="w-[16px] h-[16px]" strokeWidth={1.1} /></div>
      <div className="absolute left-[0px] top-[366px] w-[15px] h-[58px] bg-[#f1f1f1] rounded-r-[12px] flex items-center justify-center text-[#333]"><ChevronLeft className="w-[14px] h-[14px]" strokeWidth={1.2} /></div>
      <div className={`${btn} left-[925px] top-[14px] w-[32px] h-[32px]`}><Search className="w-[18px] h-[18px]" strokeWidth={1.2} /></div>
      <div className="absolute left-0 right-0 bottom-0 h-[15px] bg-white/70 flex items-center justify-between pl-[5px] pr-[5px] pb-[5px] text-[11.7px] text-[#6e6e6e] font-['Noto_Sans',sans-serif]">
        <span>Esri, NASA, NGA, USGS | City of Aurora, CO, County of Arapahoe, Esri, TomTom, Garmin, SafeGraph, METI/NASA, USGS, EPA, NPS, USDA, USFWS</span>
        <span>Powered by Esri</span>
      </div>
    </div>
  );
}

function Section({ title, children, className = "" }) {
  return (
    <section className={`pl-[15px] pr-[11px] border-b border-[#555] ${className}`}>
      <div className="text-[13.5px] leading-[20px] text-[#b8b8b8]">{title}</div>
      {children}
    </section>
  );
}

function RightPanel() {
  return (
    <aside className="relative w-[254px] shrink-0 bg-[#282828] border-l border-[#666] font-['Noto_Sans',sans-serif]">
      <div className="h-[86px] relative">
        <div className="flex items-center pl-[15px] pt-[16px] pr-[15px]">
          <span className="w-[25px] h-[25px] border border-[#666] rounded-[2px] flex items-center justify-center"><MergeIcon className="w-[16px] h-[16px]" color="#bdbdbd" /></span>
          <span className="ml-[11px] text-[15.5px] text-[#c6c6c6]">Merge geometry</span>
          <CircleHelp className="ml-auto w-[16px] h-[16px] text-[#a8a8a8]" strokeWidth={1.3} />
        </div>
        <div className="absolute left-0 right-0 top-[50px] h-[36px] flex border-b border-[#555]">
          <div className="w-[129px] -mb-px pt-[5px] border-b border-[#0a8ea8] flex items-center justify-center text-[13.5px] font-semibold text-white">Content</div>
          <div className="flex-1 pt-[5px] flex items-center justify-center text-[13.5px] text-[#8f8f8f]">Style</div>
        </div>
      </div>
      <Section title="Licence Configuration" className="h-[102px] pt-[16px]">
        <button className="mt-[19px] w-full h-[32px] pb-[3px] rounded-[2px] bg-[#00829b] flex items-center justify-center gap-[4px] text-[14px] text-white">
          <Settings className="w-[14px] h-[14px]" strokeWidth={1.4} />Configure Licence
        </button>
      </Section>
      <Section title="Select the map widget" className="h-[97px] pt-[16px]">
        <div className="mt-[19px] h-[26px] rounded-[2px] bg-[#181818] flex items-center justify-between pl-[7px] pr-[7px] text-[13px] text-white">
          Map<ChevronDown className="w-[12px] h-[12px] text-[#a8a8a8]" />
        </div>
      </Section>
      <div className="pl-[15px] pr-[12px] pt-[16px]">
        <div className="text-[13.5px] leading-[20px] text-[#b8b8b8]">Select the layers</div>
        <div className="mt-[26px] flex items-center justify-between">
          <span className="text-[12.5px] font-semibold text-[#a8a8a8]">Layers</span>
          <span className="w-[26px] h-[26px] border border-[#0a8ea8] flex items-center justify-center"><LayerActionsIcon /></span>
        </div>
        <div className="mt-[10px] flex items-center gap-[7px] h-[24px] text-[14px] text-[#dcdcdc] whitespace-nowrap overflow-hidden"><Layers className="w-[16px] h-[16px] shrink-0" strokeWidth={1.2} />police_area_r</div>
        <div className="mt-[7px] flex items-center gap-[7px] h-[24px] text-[14px] text-[#dcdcdc]"><Layers className="w-[16px] h-[16px] shrink-0" strokeWidth={1.2} />zip_codes</div>
      </div>
      <div className="absolute left-[124px] top-[378px] w-[117px] h-[120px] bg-[#383838] border border-[#4c4c4c] rounded-[2px] text-[13.5px] text-[#e4e4e4] pl-[8px]">
        <div className="h-[34px] -mb-[3px] flex items-center justify-center text-[#909090] pr-[8px]">Layer actions</div>
        <div className="h-[27px] flex items-center">Select all</div>
        <div className="h-[27px] flex items-center">Deselect all</div>
        <div className="h-[28px] flex items-center">Toggle</div>
      </div>
      <div className="absolute left-[212px] top-[290px] w-[36px] h-[36px] rounded-full bg-[#6a1ff0] border-[2px] border-white outline outline-1 outline-offset-1 outline-white flex items-center justify-center text-[16px] font-bold text-white">3</div>
      <div className="absolute left-[221px] top-[329px] w-0 h-0 border-x-[8px] border-x-transparent border-t-[14px] border-t-[#6a1ff0]" />
    </aside>
  );
}

function Footer() {
  return (
    <footer className="h-[18px] shrink-0 bg-[#4a4a4a] border-t border-[#6e6e6e] flex items-center text-[12.5px] text-[#bcbcbc] font-['Noto_Sans',sans-serif]">
      <span className="ml-[16px]">Page:</span>
      <span className="ml-[6px]">Page</span>
      <ChevronUp className="ml-[7px] w-[11px] h-[11px]" />
      <span className="ml-[30px]">Sidebar</span>
      <ChevronRight className="ml-[6px] w-[12px] h-[12px]" strokeWidth={1.2} />
      <span className="ml-[5px]">Merge geometry</span>
      <div className="ml-auto flex items-center h-full">
        <span className="text-[#a9c0d4]">A11Y</span>
        <Minus className="ml-[13px] w-[13px] h-[13px]" strokeWidth={1.2} />
        <div className="ml-[9px] w-[128px] h-[2px] bg-[#6a6a6a] relative">
          <div className="w-[64px] h-full bg-[#cfcfcf]" />
          <span className="absolute left-[58px] -top-[5px] w-[12px] h-[12px] rounded-full bg-[#333] border border-[#d8d8d8]" />
        </div>
        <Plus className="ml-[8px] w-[14px] h-[14px]" strokeWidth={1.2} />
        <span className="ml-[8px] text-[#c4c4c4]">100%</span>
        <ChevronUp className="ml-[8px] w-[11px] h-[11px]" />
        <span className="ml-[9px]"><FitIcon /></span>
        <span className="ml-[8px]"><FitIcon inward /></span>
        <span className="ml-[20px] w-[34px] h-full bg-[#5f5f5f] flex items-center justify-center">
          <span className="w-[12px] h-[12px] border border-white flex"><span className="w-1/2 bg-white" /></span>
        </span>
      </div>
    </footer>
  );
}

export default function App() {
  return (
    <div className="w-[1920px] h-[1078px] flex overflow-hidden bg-[#181818] font-['Noto_Sans',sans-serif]">
      <div className="w-[3px] shrink-0 bg-[#171722]" />
      <div className="flex-1 min-w-0 flex flex-col">
        <TopBar />
        <div className="flex-1 min-h-0 flex">
          <LeftBar />
          <main className="flex-1 min-w-0 bg-[#181818] pl-[170px] pt-[29px]">
            <div className="w-[1272px] h-[794px] flex">
              <WidgetPanel />
              <MapBox />
            </div>
          </main>
          <RightPanel />
        </div>
        <Footer />
      </div>
    </div>
  );
}
